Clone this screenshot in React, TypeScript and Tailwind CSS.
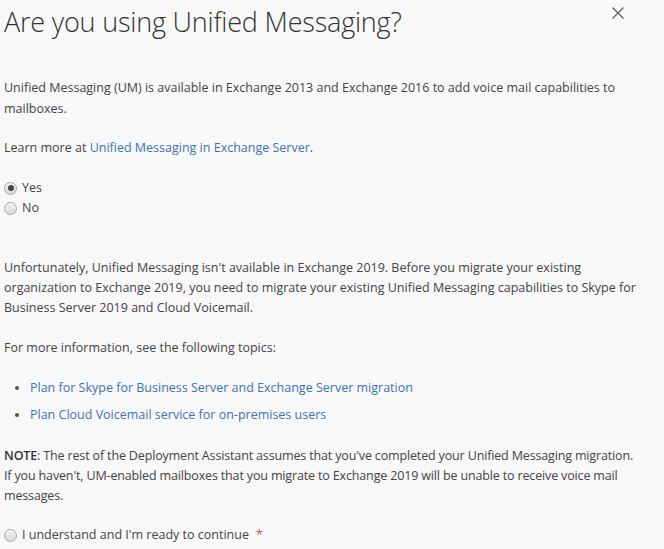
import React from 'react';

function Radio({ checked }: { checked?: boolean }) {
  return (
    <span className="inline-flex items-center justify-center w-[13px] h-[13px] rounded-full border border-[#a9a9a9] bg-gradient-to-b from-[#f4f4f4] to-[#d9d9d9] shrink-0">
      {checked && <span className="w-[6px] h-[6px] rounded-full bg-[#444]" />}
    </span>
  );
}

function Link({ children }: { children: React.ReactNode }) {
  return <a className="text-[#3b73b9] cursor-pointer">{children}</a>;
}

export default function App() {
  return (
    <div
      className="w-[664px] h-[549px] bg-[#f8f8f8] overflow-hidden text-[#444] text-[12.5px] leading-[20px] pl-[4px] pr-[4px]"
      style={{ fontFamily: '"Open Sans", "Noto Sans", sans-serif' }}
    >
      <div className="flex items-start justify-between">
        <h1 className="text-[27px] font-light text-[#333] leading-[36px] mt-[4px] tracking-[-0.2px]">
          Are you using Unified Messaging?
        </h1>
        <button className="mt-[7px] mr-[36px] text-[#555]">
          <svg width="12" height="12" viewBox="0 0 12 12">
            <path d="M0.5 0.5 L11.5 11.5 M11.5 0.5 L0.5 11.5" stroke="#555" strokeWidth="1.1" fill="none" />
          </svg>
        </button>
      </div>

      <p className="mt-[37px] leading-[21px] pr-[20px]">
        Unified Messaging (UM) is available in Exchange 2013 and Exchange 2016 to add voice mail capabilities to mailboxes.
      </p>
      <p className="mt-[19px]">
        Learn more at <Link>Unified Messaging in Exchange Server</Link>.
      </p>

      <div className="mt-[20px] flex flex-col">
        <label className="flex items-center gap-[5px] h-[20px]">
          <Radio checked />
          <span>Yes</span>
        </label>
        <label className="flex items-center gap-[5px] h-[20px]">
          <Radio />
          <span>No</span>
        </label>
      </div>

      <p className="mt-[40px] pr-[20px]">
        Unfortunately, Unified Messaging isn't available in Exchange 2019. Before you migrate your existing organization to Exchange 2019, you need to migrate your existing Unified Messaging capabilities to Skype for Business Server 2019 and Cloud Voicemail.
      </p>
      <p className="mt-[20px]">For more information, see the following topics:</p>

      <ul className="mt-[20px] flex flex-col gap-[7px] list-disc pl-[26px] marker:text-[#555]">
        <li>
          <Link>Plan for Skype for Business Server and Exchange Server migration</Link>
        </li>
        <li>
          <Link>Plan Cloud Voicemail service for on-premises users</Link>
        </li>
      </ul>

      <p className="mt-[21px] tracking-[-0.15px] pr-[20px]">
        <span className="font-semibold text-[#333]">NOTE</span>: The rest of the Deployment Assistant assumes that you've completed your Unified Messaging migration. If you haven't, UM-enabled mailboxes that you migrate to Exchange 2019 will be unable to receive voice mail messages.
      </p>

      <label className="mt-[19px] flex items-center gap-[5px] h-[20px]">
        <Radio />
        <span>I understand and I'm ready to continue</span>
        <span className="text-[#d9534f] ml-[2px]">*</span>
      </label>
    </div>
  );
}
